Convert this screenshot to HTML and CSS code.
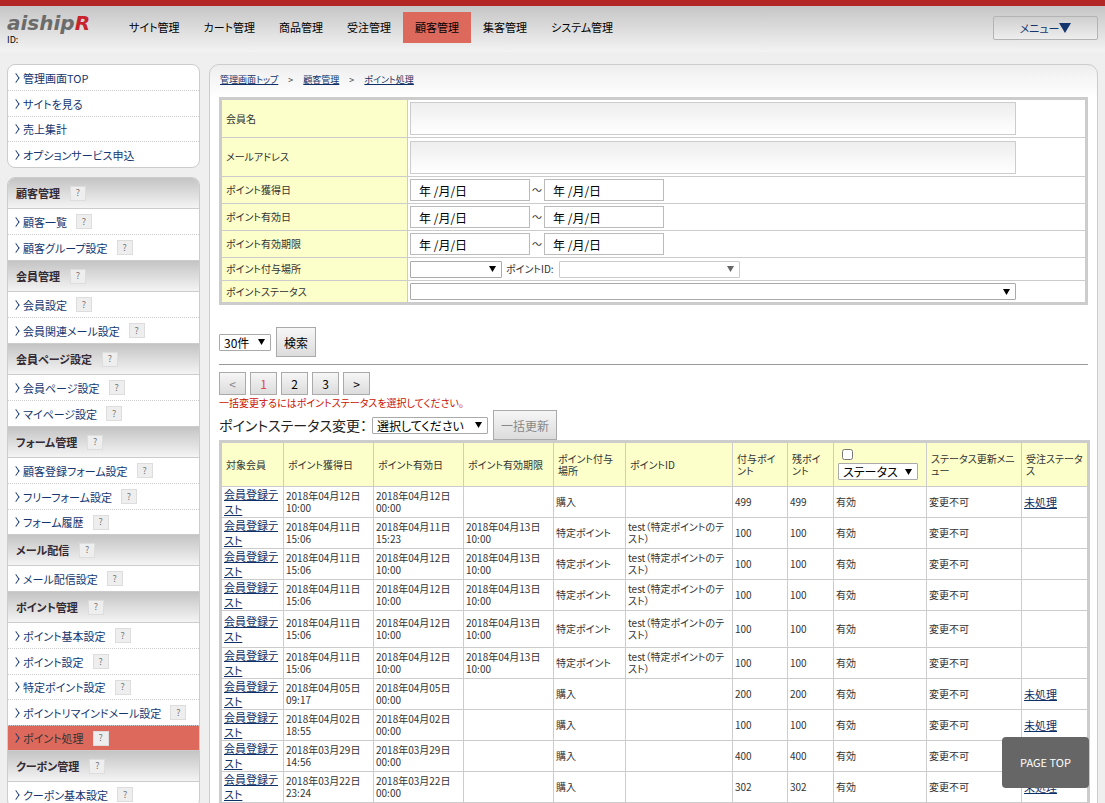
FILE: index.html
```html
<!DOCTYPE html>
<html lang="ja">

<head>
  <meta charset="UTF-8">
  <meta name="viewport" content="width=device-width, initial-scale=1.0">
  <title>ポイント処理</title>
  <link rel="stylesheet" href="styles.css">
</head>

<body>
  <header class="header">
    <div class="brand">
      <a class="logo" href="#">aiship<span>R</span></a>
      <div class="shop-id">ID:</div>
    </div>
    <nav class="global-nav">
      <a href="#">サイト管理</a>
      <a href="#">カート管理</a>
      <a href="#">商品管理</a>
      <a href="#">受注管理</a>
      <a class="active" href="#">顧客管理</a>
      <a href="#">集客管理</a>
      <a href="#">システム管理</a>
    </nav>
    <button class="menu-button" type="button">メニュー<i class="triangle"></i></button>
  </header>

  <div class="container">
    <aside class="sidebar">
      <ul class="side-box side-list">
        <li><a href="#">管理画面TOP</a></li>
        <li><a href="#">サイトを見る</a></li>
        <li><a href="#">売上集計</a></li>
        <li><a href="#">オプションサービス申込</a></li>
      </ul>

      <div class="side-box">
        <h2>顧客管理<button class="help" type="button">?</button></h2>
        <ul class="side-list">
          <li><a href="#">顧客一覧</a><button class="help" type="button">?</button></li>
          <li><a href="#">顧客グループ設定</a><button class="help" type="button">?</button></li>
        </ul>
        <h2>会員管理<button class="help" type="button">?</button></h2>
        <ul class="side-list">
          <li><a href="#">会員設定</a><button class="help" type="button">?</button></li>
          <li><a href="#">会員関連メール設定</a><button class="help" type="button">?</button></li>
        </ul>
        <h2>会員ページ設定<button class="help" type="button">?</button></h2>
        <ul class="side-list">
          <li><a href="#">会員ページ設定</a><button class="help" type="button">?</button></li>
          <li><a href="#">マイページ設定</a><button class="help" type="button">?</button></li>
        </ul>
        <h2>フォーム管理<button class="help" type="button">?</button></h2>
        <ul class="side-list">
          <li><a href="#">顧客登録フォーム設定</a><button class="help" type="button">?</button></li>
          <li><a href="#">フリーフォーム設定</a><button class="help" type="button">?</button></li>
          <li><a href="#">フォーム履歴</a><button class="help" type="button">?</button></li>
        </ul>
        <h2>メール配信<button class="help" type="button">?</button></h2>
        <ul class="side-list">
          <li><a href="#">メール配信設定</a><button class="help" type="button">?</button></li>
        </ul>
        <h2>ポイント管理<button class="help" type="button">?</button></h2>
        <ul class="side-list">
          <li><a href="#">ポイント基本設定</a><button class="help" type="button">?</button></li>
          <li><a href="#">ポイント設定</a><button class="help" type="button">?</button></li>
          <li><a href="#">特定ポイント設定</a><button class="help" type="button">?</button></li>
          <li><a href="#">ポイントリマインドメール設定</a><button class="help" type="button">?</button></li>
          <li class="active"><a href="#">ポイント処理</a><button class="help" type="button">?</button></li>
        </ul>
        <h2>クーポン管理<button class="help" type="button">?</button></h2>
        <ul class="side-list">
          <li><a href="#">クーポン基本設定</a><button class="help" type="button">?</button></li>
        </ul>
      </div>
    </aside>

    <main class="main">
      <nav class="breadcrumb">
        <a href="#">管理画面トップ</a><span>&gt;</span><a href="#">顧客管理</a><span>&gt;</span><a href="#">ポイント処理</a>
      </nav>

      <form>
        <table class="search-table">
          <tr class="tall">
            <th><label for="name">会員名</label></th>
            <td><input class="wide" type="text" id="name"></td>
          </tr>
          <tr class="tall">
            <th><label for="mail">メールアドレス</label></th>
            <td><input class="wide" type="text" id="mail"></td>
          </tr>
          <tr class="dates">
            <th><label for="get-from">ポイント獲得日</label></th>
            <td>
              <div class="fields"><input class="date" type="text" id="get-from" value="年 /月/日"><span>～</span><input class="date" type="text" aria-label="ポイント獲得日" value="年 /月/日"></div>
            </td>
          </tr>
          <tr class="dates">
            <th><label for="valid-from">ポイント有効日</label></th>
            <td>
              <div class="fields"><input class="date" type="text" id="valid-from" value="年 /月/日"><span>～</span><input class="date" type="text" aria-label="ポイント有効日" value="年 /月/日"></div>
            </td>
          </tr>
          <tr class="dates">
            <th><label for="limit-from">ポイント有効期限</label></th>
            <td>
              <div class="fields"><input class="date" type="text" id="limit-from" value="年 /月/日"><span>～</span><input class="date" type="text" aria-label="ポイント有効期限" value="年 /月/日"></div>
            </td>
          </tr>
          <tr>
            <th><label for="place">ポイント付与場所</label></th>
            <td>
              <div class="fields">
                <select class="place" id="place"><option></option></select>
                <label class="point-id-label" for="point-id">ポイントID:</label>
                <select class="point-id" id="point-id" disabled><option></option></select>
              </div>
            </td>
          </tr>
          <tr>
            <th><label for="status">ポイントステータス</label></th>
            <td><select class="wide" id="status"><option></option></select></td>
          </tr>
        </table>

        <div class="search-bar">
          <select class="per-page" aria-label="表示件数"><option>30件</option></select>
          <button class="button" type="submit">検索</button>
        </div>
      </form>

      <hr>

      <div class="pager">
        <button type="button" disabled>&lt;</button>
        <button class="current" type="button">1</button>
        <button type="button">2</button>
        <button type="button">3</button>
        <button type="button">&gt;</button>
      </div>
      <p class="notice">一括変更するにはポイントステータスを選択してください。</p>
      <div class="bulk">
        <label for="bulk-status">ポイントステータス変更：</label>
        <select class="bulk-status" id="bulk-status"><option>選択してください</option></select>
        <button class="button" type="button" disabled>一括更新</button>
      </div>

      <table class="list-table">
        <thead>
          <tr>
            <th class="c-member">対象会員</th>
            <th class="c-date">ポイント獲得日</th>
            <th class="c-date">ポイント有効日</th>
            <th class="c-date">ポイント有効期限</th>
            <th class="c-place">ポイント付与場所</th>
            <th class="c-id">ポイントID</th>
            <th class="c-point">付与ポイント</th>
            <th class="c-rest">残ポイント</th>
            <th class="c-status">
              <input type="checkbox" aria-label="すべて選択">
              <select aria-label="ステータス"><option>ステータス</option></select>
            </th>
            <th class="c-menu">ステータス更新メニュー</th>
            <th class="c-order">受注ステータス</th>
          </tr>
        </thead>
        <tbody>
          <tr>
            <td class="member"><a href="#">会員登録テスト</a></td>
            <td>2018年04月12日<br>10:00</td>
            <td>2018年04月12日<br>00:00</td>
            <td></td>
            <td>購入</td>
            <td></td>
            <td>499</td>
            <td>499</td>
            <td>有効</td>
            <td>変更不可</td>
            <td><a href="#">未処理</a></td>
          </tr>
          <tr>
            <td class="member"><a href="#">会員登録テスト</a></td>
            <td>2018年04月11日<br>15:06</td>
            <td>2018年04月11日<br>15:23</td>
            <td>2018年04月13日<br>10:00</td>
            <td>特定ポイント</td>
            <td>test（特定ポイントのテ<br>スト）</td>
            <td>100</td>
            <td>100</td>
            <td>有効</td>
            <td>変更不可</td>
            <td></td>
          </tr>
          <tr>
            <td class="member"><a href="#">会員登録テスト</a></td>
            <td>2018年04月11日<br>15:06</td>
            <td>2018年04月12日<br>10:00</td>
            <td>2018年04月13日<br>10:00</td>
            <td>特定ポイント</td>
            <td>test（特定ポイントのテ<br>スト）</td>
            <td>100</td>
            <td>100</td>
            <td>有効</td>
            <td>変更不可</td>
            <td></td>
          </tr>
          <tr>
            <td class="member"><a href="#">会員登録テスト</a></td>
            <td>2018年04月11日<br>15:06</td>
            <td>2018年04月12日<br>10:00</td>
            <td>2018年04月13日<br>10:00</td>
            <td>特定ポイント</td>
            <td>test（特定ポイントのテ<br>スト）</td>
            <td>100</td>
            <td>100</td>
            <td>有効</td>
            <td>変更不可</td>
            <td></td>
          </tr>
          <tr class="roomy">
            <td class="member"><a href="#">会員登録テスト</a></td>
            <td>2018年04月11日<br>15:06</td>
            <td>2018年04月12日<br>10:00</td>
            <td>2018年04月13日<br>10:00</td>
            <td>特定ポイント</td>
            <td>test（特定ポイントのテ<br>スト）</td>
            <td>100</td>
            <td>100</td>
            <td>有効</td>
            <td>変更不可</td>
            <td></td>
          </tr>
          <tr>
            <td class="member"><a href="#">会員登録テスト</a></td>
            <td>2018年04月11日<br>15:06</td>
            <td>2018年04月12日<br>10:00</td>
            <td>2018年04月13日<br>10:00</td>
            <td>特定ポイント</td>
            <td>test（特定ポイントのテ<br>スト）</td>
            <td>100</td>
            <td>100</td>
            <td>有効</td>
            <td>変更不可</td>
            <td></td>
          </tr>
          <tr>
            <td class="member"><a href="#">会員登録テスト</a></td>
            <td>2018年04月05日<br>09:17</td>
            <td>2018年04月05日<br>00:00</td>
            <td></td>
            <td>購入</td>
            <td></td>
            <td>200</td>
            <td>200</td>
            <td>有効</td>
            <td>変更不可</td>
            <td><a href="#">未処理</a></td>
          </tr>
          <tr>
            <td class="member"><a href="#">会員登録テスト</a></td>
            <td>2018年04月02日<br>18:55</td>
            <td>2018年04月02日<br>00:00</td>
            <td></td>
            <td>購入</td>
            <td></td>
            <td>100</td>
            <td>100</td>
            <td>有効</td>
            <td>変更不可</td>
            <td><a href="#">未処理</a></td>
          </tr>
          <tr>
            <td class="member"><a href="#">会員登録テスト</a></td>
            <td>2018年03月29日<br>14:56</td>
            <td>2018年03月29日<br>00:00</td>
            <td></td>
            <td>購入</td>
            <td></td>
            <td>400</td>
            <td>400</td>
            <td>有効</td>
            <td>変更不可</td>
            <td></td>
          </tr>
          <tr>
            <td class="member"><a href="#">会員登録テスト</a></td>
            <td>2018年03月22日<br>23:24</td>
            <td>2018年03月22日<br>00:00</td>
            <td></td>
            <td>購入</td>
            <td></td>
            <td>302</td>
            <td>302</td>
            <td>有効</td>
            <td>変更不可</td>
            <td><a href="#">未処理</a></td>
          </tr>
          <tr>
            <td></td>
            <td></td>
            <td></td>
            <td></td>
            <td></td>
            <td></td>
            <td></td>
            <td></td>
            <td></td>
            <td></td>
            <td></td>
          </tr>
        </tbody>
      </table>
    </main>
  </div>

  <a class="page-top" href="#">PAGE TOP</a>
</body>

</html>
```
FILE: styles.css
```css
* {
  box-sizing: border-box;
}

body {
  font-family: "Noto Sans CJK JP", sans-serif;
  font-feature-settings: "palt";
  font-size: 10px;
  line-height: 12px;
  margin: 0;
  color: #333;
  background-color: #efefef;
}

button,
input,
select {
  font-family: inherit;
  font-feature-settings: inherit;
  margin: 0;
}

a {
  color: #0f2f66;
}

h2,
p,
ul {
  margin: 0;
  padding: 0;
}

/* header */

.header {
  display: flex;
  align-items: flex-start;
  height: 52px;
  padding: 6px 7px 0;
  border-top: 6px solid #b22626;
  background: linear-gradient(#c6c6c6, #f3f3f3);
}

.brand {
  width: 110px;
}

.logo {
  display: block;
  font-family: "DejaVu Sans", sans-serif;
  font-size: 20px;
  font-style: italic;
  font-weight: bold;
  line-height: 22px;
  color: #6b6b6b;
  text-decoration: none;
}

.logo span {
  color: #c8232c;
}

.shop-id {
  font-size: 9px;
  color: #000;
}

.global-nav {
  display: flex;
  flex: 1;
}

.global-nav a {
  padding: 0 12px;
  font-size: 11px;
  line-height: 31px;
  color: #000;
  text-decoration: none;
}

.global-nav a.active {
  background-color: #dd695c;
}

.menu-button {
  width: 105px;
  height: 24px;
  margin-top: 4px;
  padding: 0;
  font-size: 11px;
  color: #14366f;
  border: 1px solid #b4b4b4;
  border-radius: 2px;
  background: linear-gradient(#cfcfcf, #eee);
}

.triangle {
  display: inline-block;
  border: 6px solid transparent;
  border-top: 10px solid #14366f;
  border-bottom: 0;
}

/* layout */

.container {
  display: flex;
  align-items: flex-start;
  gap: 9px;
  padding: 12px 7px 0;
}

.sidebar {
  flex: 0 0 193px;
}

.main {
  flex: 1;
  min-width: 0;
  padding: 0 9px;
  border: 1px solid #ccc;
  border-radius: 10px 10px 0 0;
  background: #fff linear-gradient(#eee, #fff) no-repeat;
  background-size: 100% 32px;
}

/* sidebar */

.side-box {
  margin-bottom: 9px;
  border: 1px solid #ccc;
  border-radius: 8px;
  background-color: #fff;
  overflow: hidden;
}

.side-box h2 {
  display: flex;
  align-items: center;
  gap: 10px;
  height: 32px;
  padding-left: 8px;
  font-size: 11px;
  color: #332a33;
  border-top: 1px solid #ccc;
  border-bottom: 1px solid #ccc;
  background: linear-gradient(#c4c4c4, #f4f4f4);
}

.side-box h2:first-child {
  height: 31px;
  border-top: 0;
}

.side-list {
  list-style: none;
}

.side-list li {
  display: flex;
  align-items: center;
  gap: 9px;
  height: 25px;
  padding-left: 5px;
}

.side-list li:nth-child(even) {
  height: 26px;
}

.side-list li + li {
  border-top: 1px dotted #ccc;
}

.side-list a {
  display: flex;
  align-items: center;
  gap: 4px;
  font-size: 11px;
  color: #14366f;
  text-decoration: none;
}

.side-list a::before {
  content: "";
  width: 5px;
  height: 5px;
  border-top: 1px solid #14366f;
  border-right: 1px solid #14366f;
  transform: rotate(45deg) skew(10deg, 10deg);
}

.side-list .active {
  background-color: #dd695c;
}

.side-list .active a {
  color: #333;
}

.help {
  width: 16px;
  height: 15px;
  padding: 0;
  font-size: 9px;
  line-height: 12px;
  color: #777;
  border: 1px solid #ddd;
  background-color: #eee;
}

/* search form */

.breadcrumb {
  display: flex;
  gap: 10px;
  height: 32px;
  padding: 9px 1px 0;
  font-size: 9px;
}

table {
  width: 100%;
  border: 3px solid #ccc;
  border-collapse: collapse;
  background-color: #fff;
}

th,
td {
  border: 1px solid #ccc;
  text-align: left;
}

th {
  font-weight: normal;
  background-color: #fcffc9;
}

.search-table {
  font-size: 10px;
}

.search-table tr {
  height: 23px;
}

.search-table .tall {
  height: 39px;
}

.search-table .dates {
  height: 27px;
}

.search-table th {
  width: 187px;
  padding: 0 4px;
}

.search-table td {
  padding: 0 2px;
}

.fields {
  display: flex;
  align-items: center;
}

input[type="text"] {
  display: block;
  border: 1px solid #bbb;
}

input.wide {
  height: 33px;
  border-color: #ccc;
  background: linear-gradient(#eee, #fff);
}

.wide {
  display: block;
  width: 90%;
}

.date {
  width: 120px;
  height: 22px;
  padding: 0 8px;
  font-size: 12px;
  color: #000;
}

.fields span {
  width: 14px;
  text-align: center;
}

select {
  appearance: none;
  height: 17px;
  padding: 0 4px;
  font-size: 12px;
  line-height: 15px;
  color: #000;
  border: 1px solid #aaa;
  border-radius: 1px;
  background: #fff url("data:image/svg+xml,%3Csvg xmlns='http://www.w3.org/2000/svg' width='7' height='6'%3E%3Cpath d='M0 0h7L3.500 6z'/%3E%3C/svg%3E") no-repeat right 5px center;
}

select:disabled {
  opacity: 0.6;
}

.place {
  width: 92px;
}

.point-id-label {
  padding: 0 5px 0 4px;
}

.point-id {
  width: 181px;
}

.search-bar {
  display: flex;
  align-items: center;
  gap: 5px;
  margin-top: 22px;
}

.per-page {
  width: 52px;
}

.button {
  height: 30px;
  padding: 0 7px;
  font-size: 12px;
  color: #000;
  border: 1px solid #aaa;
  background: linear-gradient(#f6f6f6, #dcdcdc);
}

.button:disabled {
  color: #888;
}

hr {
  margin: 7px 0;
  border: 0;
  border-top: 1px solid #999;
}

/* list */

.pager {
  display: flex;
  gap: 4px;
}

.pager button {
  width: 27px;
  height: 23px;
  padding: 0;
  font-size: 12px;
  color: #000;
  border: 1px solid #aaa;
  background: linear-gradient(#f6f6f6, #dcdcdc);
}

.pager button:disabled {
  color: #888;
}

.pager .current {
  color: #e0484a;
}

.notice {
  line-height: 15px;
  color: #c10;
}

.bulk {
  display: flex;
  align-items: center;
  gap: 5px;
}

.bulk label {
  font-size: 14px;
  color: #222;
}

.bulk-status {
  width: 116px;
}

.list-table {
  table-layout: fixed;
}

.list-table thead tr {
  height: 45px;
}

.list-table tr {
  height: 31px;
}

.list-table .roomy {
  height: 37px;
}

.list-table th {
  padding: 0 4px;
}

.list-table td {
  padding: 0 2px;
}

.list-table td a {
  font-size: 11px;
}

.list-table .member {
  padding: 0 2px;
  line-height: 15px;
}

.c-member {
  width: 63px;
}

.c-date {
  width: 90px;
}

.c-place {
  width: 72px;
}

.c-id {
  width: 107px;
}

.c-point {
  width: 55px;
}

.c-rest {
  width: 46px;
}

.c-status {
  width: 93px;
}

.c-menu {
  width: 95px;
}

.c-order {
  width: 67px;
}

.c-status input {
  display: block;
  width: 11px;
  height: 11px;
  margin: 0 0 3px 4px;
}

.c-status select {
  display: block;
  width: 80px;
}

.page-top {
  position: fixed;
  right: 16px;
  bottom: 15px;
  width: 87px;
  font-size: 11px;
  line-height: 51px;
  text-align: center;
  color: #fff;
  text-decoration: none;
  border-radius: 4px;
  background-color: #666;
}
```
